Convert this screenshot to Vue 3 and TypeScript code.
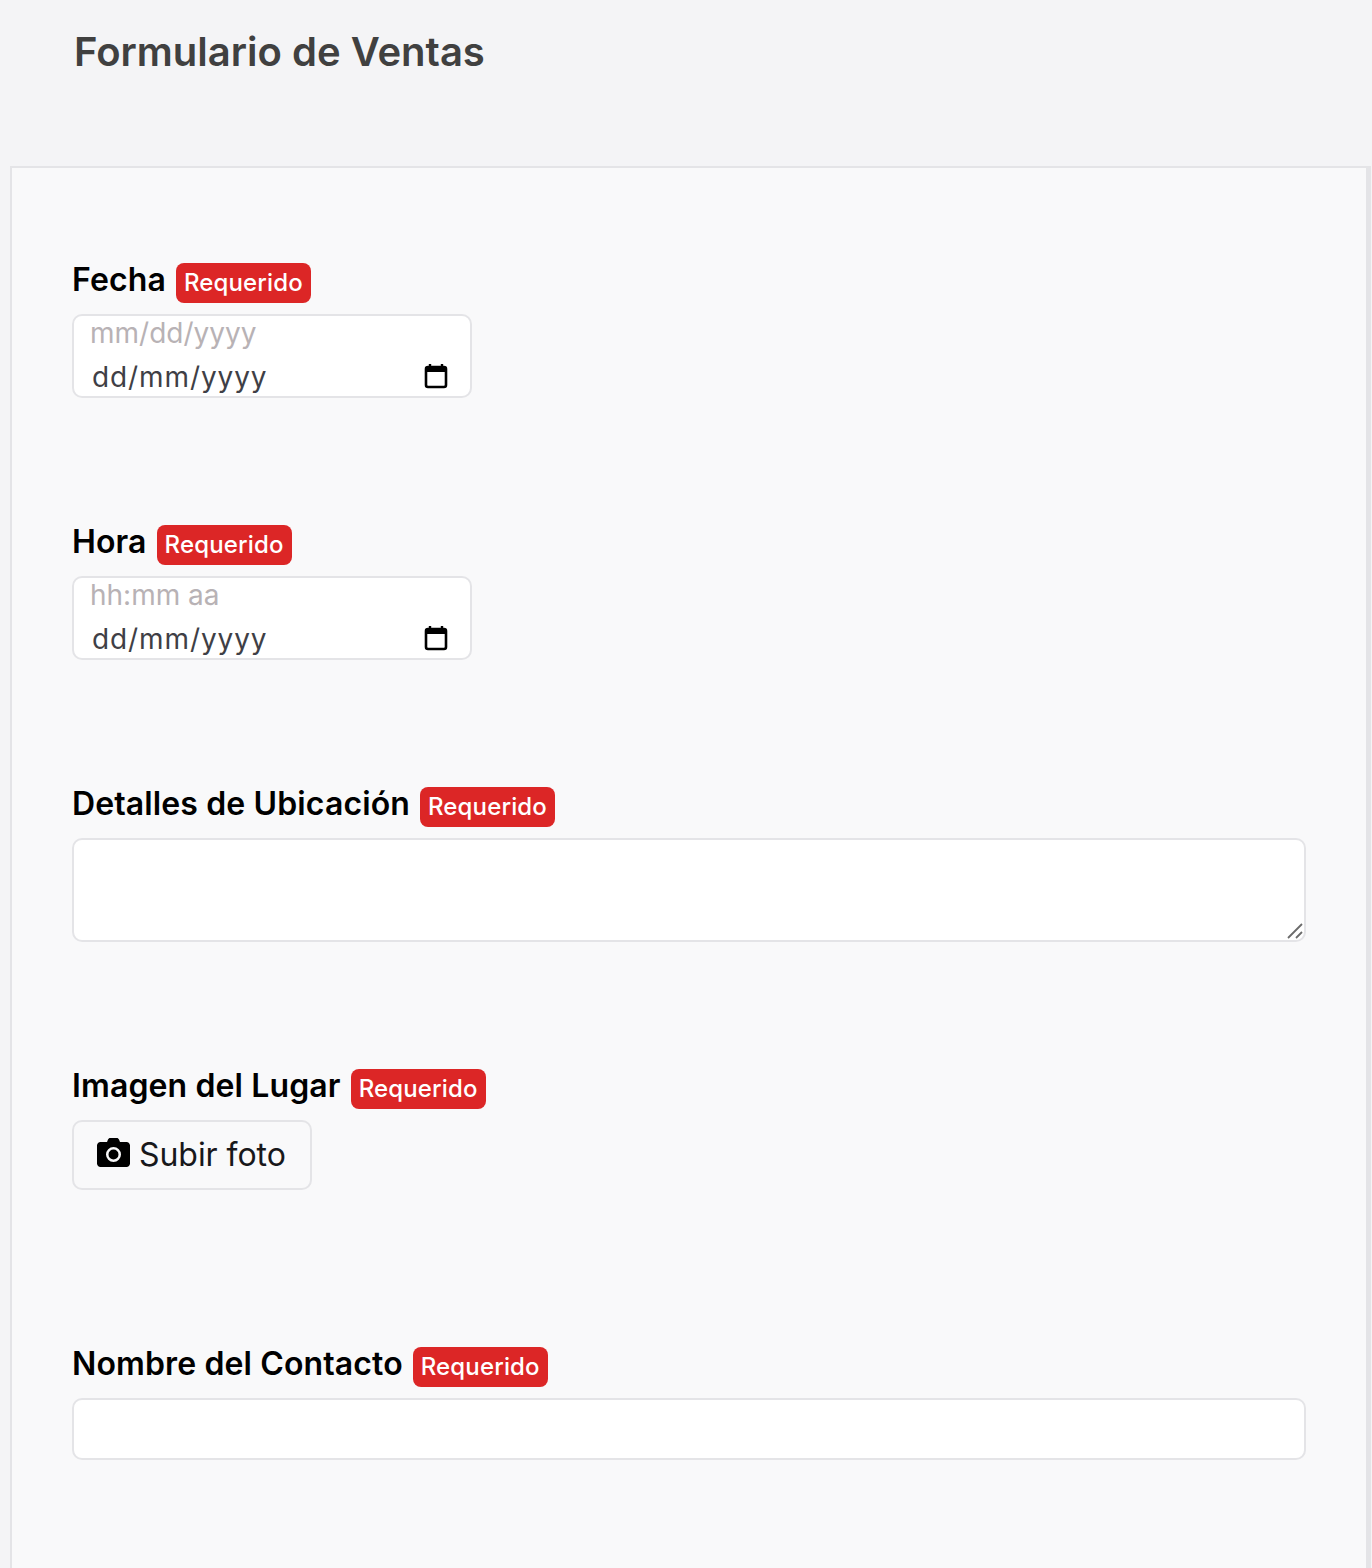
<script setup lang="ts">
interface Field {
  label: string
  kind: 'date' | 'area' | 'upload' | 'text'
  hint?: string
}
const fields: Field[] = [
  { label: 'Fecha', kind: 'date', hint: 'mm/dd/yyyy' },
  { label: 'Hora', kind: 'date', hint: 'hh:mm aa' },
  { label: 'Detalles de Ubicación', kind: 'area' },
  { label: 'Imagen del Lugar', kind: 'upload' },
  { label: 'Nombre del Contacto', kind: 'text' },
]
</script>

<template>
  <div class="page">
    <header class="header">
      <h1 class="title">Formulario de Ventas</h1>
    </header>
    <main class="panel">
      <section v-for="f in fields" :key="f.label" class="field" :class="'field-' + f.kind">
        <div class="label-row">
          <label class="label">{{ f.label }}</label>
          <span class="badge">Requerido</span>
        </div>

        <div v-if="f.kind === 'date'" class="date-box">
          <div class="hint">{{ f.hint }}</div>
          <div class="date-row">
            <span class="date-text">dd/mm/yyyy</span>
            <svg class="cal" width="24" height="26" viewBox="0 0 24 26" aria-hidden="true">
              <path d="M6 1v3M18 1v3" stroke="#000" stroke-width="2.4" fill="none" />
              <rect x="2" y="4" width="20" height="20" rx="2" fill="none" stroke="#000" stroke-width="2.6" />
              <rect x="2" y="4" width="20" height="5" fill="#000" />
            </svg>
          </div>
        </div>

        <div v-else-if="f.kind === 'area'" class="area-wrap">
          <textarea class="area"></textarea>
          <svg class="grip" width="16" height="16" viewBox="0 0 16 16" aria-hidden="true">
            <path d="M1 15L15 1M9 15L15 9" stroke="#6b6b6b" stroke-width="1.8" fill="none" />
          </svg>
        </div>

        <button v-else-if="f.kind === 'upload'" class="upload" type="button">
          <svg class="cam" width="33" height="29" viewBox="0 0 33 29" aria-hidden="true">
            <path fill="#000" fill-rule="evenodd" d="M11 1.5C11.4.6 12.2 0 13.2 0h6.600c1 0 1.800.6 2.200 1.500L23 4h6.500C31.400 4 33 5.600 33 7.500v18c0 1.900-1.600 3.500-3.500 3.500h-26C1.600 29 0 27.400 0 25.500v-18C0 5.600 1.600 4 3.500 4H10L11 1.500ZM16.500 9a7.500 7.500 0 1 0 0 15 7.500 7.500 0 0 0 0-15ZM16.500 11.500a5 5 0 1 1 0 10 5 5 0 0 1 0-10Z" />
          </svg>
          <span class="upload-text">Subir foto</span>
        </button>

        <input v-else class="text" type="text" />
      </section>
    </main>
  </div>
</template>

<style scoped>
.page {
  height: 1568px;
  overflow: hidden;
  background: #f4f4f6;
  font-family: Inter, "Liberation Sans", sans-serif;
  box-sizing: border-box;
  padding-left: 10px;
}
.header {
  height: 166px;
  padding-left: 64px;
  box-sizing: border-box;
}
.title {
  margin: 0;
  padding-top: 28px;
  font-size: 40px;
  line-height: 48px;
  font-weight: 600;
  color: #404040;
}
.panel {
  width: 1361px;
  height: 1402px;
  box-sizing: border-box;
  background: #f9f9fa;
  border: 2px solid #e4e4e7;
  border-right-width: 5px;
  border-bottom: 0;
  padding: 95px 60px 0 60px;
}
.field {
  margin-bottom: 127px;
}
.field-upload {
  margin-bottom: 157px;
}
.label-row {
  display: flex;
  gap: 10px;
  height: 40px;
  margin-bottom: 11px;
}
.label {
  font-size: 32px;
  line-height: 34px;
  font-weight: 600;
  letter-spacing: 0.12px;
  color: #000;
}
.badge {
  height: 40px;
  box-sizing: border-box;
  padding: 0 8px;
  border-radius: 8px;
  background: #dc2626;
  color: #fff;
  font-size: 24px;
  letter-spacing: 0.15px;
  font-weight: 500;
  line-height: 40px;
}
.date-box {
  width: 400px;
  height: 84px;
  box-sizing: border-box;
  background: #fff;
  border: 2px solid #e4e4e7;
  border-radius: 10px;
  padding: 0 22px 0 16px;
  overflow: hidden;
}
.hint {
  height: 36px;
  line-height: 35px;
  font-size: 28px;
  color: #b8b2b5;
}
.date-row {
  display: flex;
  justify-content: space-between;
  align-items: center;
  height: 48px;
  padding-left: 2px;
}
.date-text {
  font-size: 28px;
  line-height: 34px;
  margin-top: 2px;
  letter-spacing: 0.9px;
  color: #3f3f46;
}
.area-wrap {
  position: relative;
  height: 104px;
}
.area {
  display: block;
  width: 100%;
  height: 104px;
  box-sizing: border-box;
  background: #fff;
  border: 2px solid #e4e4e7;
  border-radius: 10px;
  resize: none;
  outline: none;
}
.grip {
  position: absolute;
  right: 3px;
  bottom: 3px;
}
.upload {
  display: flex;
  align-items: center;
  gap: 9px;
  width: 240px;
  height: 70px;
  box-sizing: border-box;
  padding: 0 0 2px 23px;
  background: transparent;
  border: 2px solid #e4e4e7;
  border-radius: 10px;
  font-family: inherit;
  font-size: 32px;
  color: #18181b;
}
.cam {
  margin-bottom: 3px;
}
.upload-text {
  letter-spacing: -0.05px;
}
.text {
  display: block;
  width: 100%;
  height: 62px;
  box-sizing: border-box;
  background: #fff;
  border: 2px solid #e4e4e7;
  border-radius: 10px;
  outline: none;
}
</style>
